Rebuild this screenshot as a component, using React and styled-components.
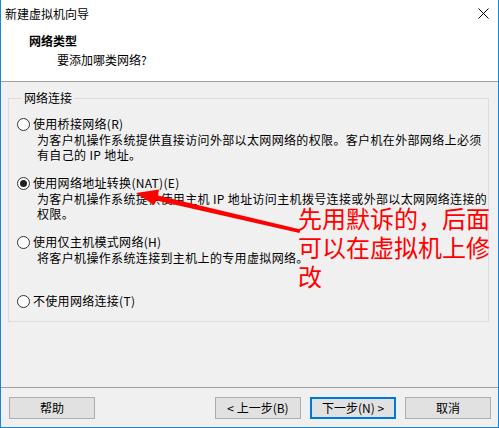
import React from 'react';
import styled, { createGlobalStyle } from 'styled-components';

const GlobalStyle = createGlobalStyle`
  html, body {
    margin: 0;
    padding: 0;
    background: #ffffff;
  }
  * {
    box-sizing: border-box;
  }
`;

const Window = styled.div`
  position: relative;
  width: 499px;
  height: 428px;
  display: flex;
  flex-direction: column;
  background: #f0f0f0;
  border: 1px solid #1883d7;
  border-top: none;
  font-family: 'Noto Sans CJK SC', 'Noto Sans', sans-serif;
  font-size: 12px;
  color: #000;
  overflow: hidden;
`;

const TitleBar = styled.div`
  height: 30px;
  flex: none;
  display: flex;
  align-items: center;
  justify-content: space-between;
  padding: 0 9px 3px 4px;
  background: #fff;
  line-height: 16px;
`;

const Header = styled.div`
  height: 52px;
  flex: none;
  padding: 3px 0 0 28px;
  background: #fff;
  border-bottom: 1px solid #a0a0a0;
  line-height: 16px;
`;

const HeaderTitle = styled.div`
  font-weight: 700;
`;

const HeaderSub = styled.div`
  margin: 3px 0 0 28px;
`;

const Body = styled.div`
  flex: 1;
  padding: 8px 9px 0 7px;
`;

const GroupBox = styled.fieldset`
  margin: 0;
  padding: 10px 0 12px 8px;
  border: 1px solid #dcdcdc;
`;

const Legend = styled.legend`
  margin-left: 5px;
  padding: 0 2px;
  line-height: 16px;
`;

const Option = styled.div`
  height: ${({ $last }) => ($last ? 'auto' : '59px')};
`;

const OptionLabel = styled.label`
  display: flex;
  align-items: center;
  gap: 3px;
  height: 16px;
  line-height: 16px;
  letter-spacing: 0.3px;
  white-space: nowrap;
`;

const Radio = styled.span`
  position: relative;
  width: 13px;
  height: 13px;
  flex: none;
  border: 1px solid #333;
  border-radius: 50%;
  background: #fff;

  &::after {
    content: '';
    display: ${({ $checked }) => ($checked ? 'block' : 'none')};
    position: absolute;
    left: 2px;
    top: 2px;
    width: 7px;
    height: 7px;
    border-radius: 50%;
    background: #222;
  }
`;

const Desc = styled.div`
  margin-left: 20px;
  line-height: 15px;
  letter-spacing: 0.35px;
  white-space: nowrap;
`;

const Footer = styled.div`
  height: 40px;
  flex: none;
  display: flex;
  gap: 9px;
  padding: 9px 7px 0 8px;
  border-top: 1px solid #a0a0a0;
`;

const Spacer = styled.div`
  flex: 1;
`;

const Button = styled.button`
  width: 86px;
  height: 22px;
  padding: 0;
  font-family: inherit;
  font-size: 12px;
  color: #000;
  background: #e1e1e1;
  border: ${({ $focused }) => ($focused ? '2px solid #0078d7' : '1px solid #adadad')};
  line-height: 16px;
`;

const Note = styled.div`
  position: absolute;
  left: 297px;
  top: 203px;
  font-size: 24px;
  line-height: 29px;
  color: #ff0000;
  white-space: nowrap;
  pointer-events: none;
`;

const Overlay = styled.svg`
  position: absolute;
  left: 0;
  top: 0;
  pointer-events: none;
`;

const options = [
  {
    label: '使用桥接网络(R)',
    lines: [
      '为客户机操作系统提供直接访问外部以太网网络的权限。客户机在外部网络上必须',
      '有自己的 IP 地址。',
    ],
  },
  {
    label: '使用网络地址转换(NAT)(E)',
    checked: true,
    lines: [
      '为客户机操作系统提供使用主机 IP 地址访问主机拨号连接或外部以太网网络连接的',
      '权限。',
    ],
  },
  {
    label: '使用仅主机模式网络(H)',
    lines: ['将客户机操作系统连接到主机上的专用虚拟网络。'],
  },
  { label: '不使用网络连接(T)', lines: [] },
];

const CloseIcon = () => (
  <svg width="11" height="11" viewBox="0 0 11 11">
    <path d="M0.5 0.5 L10.5 10.5 M10.5 0.5 L0.5 10.5" stroke="#000" strokeWidth="1" />
  </svg>
);

export default function App() {
  return (
    <>
      <GlobalStyle />
      <Window>
        <TitleBar>
          <span>新建虚拟机向导</span>
          <CloseIcon />
        </TitleBar>
        <Header>
          <HeaderTitle>网络类型</HeaderTitle>
          <HeaderSub>要添加哪类网络?</HeaderSub>
        </Header>
        <Body>
          <GroupBox>
            <Legend>网络连接</Legend>
            {options.map((opt, i) => (
              <Option key={i} $last={i === options.length - 1}>
                <OptionLabel>
                  <Radio $checked={opt.checked} />
                  {opt.label}
                </OptionLabel>
                {opt.lines.map((line, j) => (
                  <Desc key={j}>{line}</Desc>
                ))}
              </Option>
            ))}
          </GroupBox>
        </Body>
        <Footer>
          <Button>帮助</Button>
          <Spacer />
          <Button>&lt; 上一步(B)</Button>
          <Button $focused>下一步(N) &gt;</Button>
          <Button>取消</Button>
        </Footer>
        <Overlay width="499" height="428" viewBox="0 0 499 428">
          <polygon
            points="135,193 158,189.5 157,195.5 299.5,229.5 298.5,233 155.5,200.5 153,205"
            fill="#ff0000"
          />
        </Overlay>
        <Note>
          先用默诉的，后面
          <br />
          可以在虚拟机上修
          <br />
          改
        </Note>
      </Window>
    </>
  );
}
